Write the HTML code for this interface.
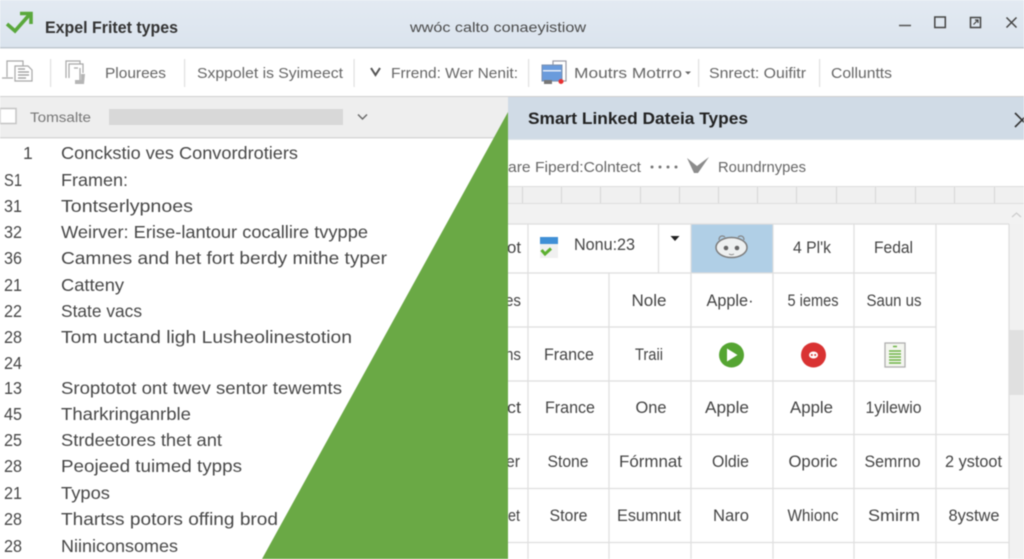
<!DOCTYPE html>
<html><head><meta charset="utf-8"><title>Expel Fritet types</title>
<style>
html,body{margin:0;padding:0;background:#fff;width:1024px;height:559px;overflow:hidden}
svg{display:block;position:absolute;left:0;top:0;filter:blur(.45px)}
text{font-family:"Liberation Sans",sans-serif;fill:#3c3c3c}
.l{font-size:17.5px;fill:#474747}
.t{font-size:15px;fill:#666}
.c{font-size:16.5px;fill:#444;text-anchor:middle}
</style></head><body>
<svg width="1024" height="559" viewBox="0 0 1024 559" xmlns="http://www.w3.org/2000/svg">
<defs><linearGradient id="tb" x1="0" y1="0" x2="0" y2="1"><stop offset="0" stop-color="#e3eaf2"/><stop offset="1" stop-color="#dbe4ee"/></linearGradient></defs>
<rect width="1024" height="559" fill="#fff"/>
<!-- title bar -->
<rect width="1024" height="47" fill="url(#tb)"/>
<rect y="47" width="1024" height="1.5" fill="#c0c8d0"/>
<path d="M7 24L15 31L30 14M20 13.500H31V24" fill="none" stroke="#5aa83c" stroke-width="3.600"/>
<text x="45" y="33" font-size="16.5" font-weight="bold" style="fill:#333" textLength="133" lengthAdjust="spacingAndGlyphs">Expel Fritet types</text>
<text x="410" y="32" font-size="14" style="fill:#4a4a4a" textLength="176" lengthAdjust="spacingAndGlyphs">wwóc calto conaeyistiow</text>
<path d="M899 25.500H911" stroke="#555" stroke-width="1.500"/>
<rect x="934.800" y="17" width="10.500" height="10.500" fill="none" stroke="#444" stroke-width="1.500"/>
<rect x="970.500" y="17.500" width="10" height="10" fill="none" stroke="#444" stroke-width="1.500"/>
<path d="M973.500 24.500L978 20M975 20H978V23" fill="none" stroke="#444" stroke-width="1.200"/>
<path d="M1006.500 17.500L1016.500 27.500M1016.500 17.500L1006.500 27.500" stroke="#444" stroke-width="1.500"/>
<!-- toolbar -->
<rect y="48.500" width="1024" height="47.500" fill="#fff"/>
<rect y="96" width="1024" height="1" fill="#d0d0d0"/>
<g fill="none" stroke="#a8a8a8" stroke-width="1.200">
<path d="M2 78H13M7 77V61H23V66"/>
<path d="M15 66H28L32 70V81H15Z" fill="#fff"/>
<path d="M18 69H25M18 72H29M18 75H29M18 78H26" stroke="#999"/>
<path d="M66 78V61H80V64M69 78V64H83V73"/>
<path d="M74 68H78M80 68V80"/>
</g>
<path d="M75 84L84 84L85 74H81V80H75Z" fill="#b5b5b5"/>
<g fill="#e0e0e0">
<rect x="50" y="59" width="1.200" height="28"/><rect x="184" y="59" width="1.200" height="28"/><rect x="353.500" y="59" width="1.200" height="28"/><rect x="528" y="59" width="1.200" height="28"/><rect x="698" y="59" width="1.200" height="28"/><rect x="819" y="59" width="1.200" height="28"/>
</g>
<text class="t" x="105" y="78" textLength="61" lengthAdjust="spacingAndGlyphs">Plourees</text>
<text class="t" x="197" y="78" textLength="146" lengthAdjust="spacingAndGlyphs">Sxppolet is Syimeect</text>
<path d="M371 68L375.500 75L380 68" fill="none" stroke="#555" stroke-width="2"/>
<text class="t" x="391" y="78" textLength="127" lengthAdjust="spacingAndGlyphs">Frrend: Wer Nenit:</text>
<rect x="553" y="61" width="13" height="20" fill="#fff" stroke="#9a9aa5" stroke-width="1.200"/>
<rect x="542" y="65" width="20" height="16" fill="#6a9bdc" stroke="#7a90b0"/>
<rect x="543" y="70" width="18" height="1.500" fill="#e8eef8"/>
<path d="M544 84H552V80H544Z" fill="#777"/>
<circle cx="561" cy="81.500" r="2.500" fill="#e83030"/>
<text class="t" x="574" y="78" textLength="108" lengthAdjust="spacingAndGlyphs">Moutrs  Motrro</text>
<path d="M685 71.500H691L688 74.500Z" fill="#666"/>
<text class="t" x="709" y="78" textLength="97" lengthAdjust="spacingAndGlyphs">Snrect:  Ouifitr</text>
<text class="t" x="831" y="78" textLength="61" lengthAdjust="spacingAndGlyphs">Colluntts</text>
<!-- filter bar -->
<rect y="97" width="508" height="40" fill="#eeeeee"/>
<rect y="137" width="508" height="1.500" fill="#d8d8d8"/>
<rect x="0" y="108.500" width="16" height="15" fill="#fff" stroke="#c4c4c4" stroke-width="1.500"/>
<text x="30" y="122" font-size="13.500" style="fill:#777" textLength="61" lengthAdjust="spacingAndGlyphs">Tomsalte</text>
<rect x="109" y="109" width="234" height="16" fill="#d8d8d8"/>
<path d="M358 114.500L362.500 119L367 114.500" fill="none" stroke="#666" stroke-width="1.400"/>
<!-- list -->
<g class="nums">
<text class="l" x="23" y="159">1</text>
<text class="l" x="4" y="186" textLength="18" lengthAdjust="spacingAndGlyphs">S1</text>
<text class="l" x="4" y="212" textLength="18" lengthAdjust="spacingAndGlyphs">31</text>
<text class="l" x="4" y="238" textLength="18" lengthAdjust="spacingAndGlyphs">32</text>
<text class="l" x="4" y="264" textLength="18" lengthAdjust="spacingAndGlyphs">36</text>
<text class="l" x="4" y="291" textLength="18" lengthAdjust="spacingAndGlyphs">21</text>
<text class="l" x="4" y="317" textLength="18" lengthAdjust="spacingAndGlyphs">22</text>
<text class="l" x="4" y="343" textLength="18" lengthAdjust="spacingAndGlyphs">28</text>
<text class="l" x="4" y="369" textLength="18" lengthAdjust="spacingAndGlyphs">24</text>
<text class="l" x="4" y="394" textLength="18" lengthAdjust="spacingAndGlyphs">13</text>
<text class="l" x="4" y="420" textLength="18" lengthAdjust="spacingAndGlyphs">45</text>
<text class="l" x="4" y="446" textLength="18" lengthAdjust="spacingAndGlyphs">25</text>
<text class="l" x="4" y="472" textLength="18" lengthAdjust="spacingAndGlyphs">28</text>
<text class="l" x="4" y="499" textLength="18" lengthAdjust="spacingAndGlyphs">21</text>
<text class="l" x="4" y="525" textLength="18" lengthAdjust="spacingAndGlyphs">28</text>
<text class="l" x="4" y="552" textLength="18" lengthAdjust="spacingAndGlyphs">28</text>
</g>
<text class="l" x="61" y="159" textLength="237" lengthAdjust="spacingAndGlyphs">Conckstio ves Convordrotiers</text>
<text class="l" x="61" y="186" textLength="67" lengthAdjust="spacingAndGlyphs">Framen:</text>
<text class="l" x="61" y="212" textLength="132" lengthAdjust="spacingAndGlyphs">Tontserlypnoes</text>
<text class="l" x="61" y="238" textLength="307" lengthAdjust="spacingAndGlyphs">Weirver: Erise-lantour cocallire tvyppe</text>
<text class="l" x="61" y="264" textLength="326" lengthAdjust="spacingAndGlyphs">Camnes and het fort berdy mithe typer</text>
<text class="l" x="61" y="291" textLength="63" lengthAdjust="spacingAndGlyphs">Catteny</text>
<text class="l" x="61" y="317" textLength="81" lengthAdjust="spacingAndGlyphs">State vacs</text>
<text class="l" x="61" y="343" textLength="291" lengthAdjust="spacingAndGlyphs">Tom uctand ligh Lusheolinestotion</text>
<text class="l" x="61" y="394" textLength="281" lengthAdjust="spacingAndGlyphs">Sroptotot ont twev sentor tewemts</text>
<text class="l" x="61" y="420" textLength="130" lengthAdjust="spacingAndGlyphs">Tharkringanrble</text>
<text class="l" x="61" y="446" textLength="161" lengthAdjust="spacingAndGlyphs">Strdeetores thet ant</text>
<text class="l" x="61" y="472" textLength="181" lengthAdjust="spacingAndGlyphs">Peojeed tuimed typps</text>
<text class="l" x="61" y="499" textLength="49" lengthAdjust="spacingAndGlyphs">Typos</text>
<text class="l" x="61" y="525" textLength="217" lengthAdjust="spacingAndGlyphs">Thartss potors offing brod</text>
<text class="l" x="61" y="552" textLength="117" lengthAdjust="spacingAndGlyphs">Niiniconsomes</text>
<!-- right panel -->
<rect x="508" y="97" width="516" height="42" fill="#d0dbe6"/>
<rect x="508" y="139" width="516" height="1" fill="#dfe5ea"/>
<text x="528" y="124" font-size="16.500" font-weight="bold" style="fill:#222" textLength="220" lengthAdjust="spacingAndGlyphs">Smart Linked Dateia Types</text>
<path d="M1015 113L1029 127M1015 127L1029 113" fill="none" stroke="#333" stroke-width="1.600"/>
<text class="t" x="508" y="172" textLength="133" lengthAdjust="spacingAndGlyphs">are Fiperd:Colntect</text>
<g fill="#777"><circle cx="652" cy="167" r="1.500"/><circle cx="660" cy="167" r="1.500"/><circle cx="668" cy="167" r="1.500"/><circle cx="676" cy="167" r="1.500"/></g>
<path d="M687 158L697 166L709 157L698 173H694Z" fill="#8c8c8c"/>
<text class="t" x="718" y="172" textLength="88" lengthAdjust="spacingAndGlyphs">Roundrnypes</text>
<!-- ruler -->
<rect x="508" y="186" width="516" height="17" fill="#f0f0f0"/>
<rect x="508" y="186" width="516" height="1" fill="#dedede"/>
<rect x="508" y="203" width="516" height="1" fill="#dedede"/>
<g fill="#d6d6d6">
<rect x="522" y="187" width="1" height="16"/><rect x="561" y="187" width="1" height="16"/><rect x="600" y="187" width="1" height="16"/><rect x="640" y="187" width="1" height="16"/><rect x="679" y="187" width="1" height="16"/><rect x="718" y="187" width="1" height="16"/><rect x="757" y="187" width="1" height="16"/><rect x="796" y="187" width="1" height="16"/><rect x="836" y="187" width="1" height="16"/><rect x="875" y="187" width="1" height="16"/><rect x="915" y="187" width="1" height="16"/><rect x="954" y="187" width="1" height="16"/><rect x="994" y="187" width="1" height="16"/>
</g>
<rect x="508" y="204" width="516" height="20" fill="#f2f2f2"/>
<!-- scrollbar -->
<rect x="1009" y="224" width="15" height="335" fill="#f1f1f1"/>
<rect x="1009" y="330" width="15" height="65" fill="#e0e0e0"/>
<path d="M1012 217L1016.500 213L1021 217" fill="none" stroke="#ccc" stroke-width="1.200"/>
<!-- grid -->
<rect x="691" y="224" width="82" height="49" fill="#b0cfe6"/>
<g fill="none" stroke="#dedede" stroke-width="1.200">
<path d="M508 224H1009M508 273H936M508 327H936M508 381H936M508 434.500H1009M508 488.500H1009M508 542.500H1009"/>
<path d="M528 224V559M609 273V559M658.500 224V273M691 224V559M773 224V559M854 224V559M936 224V559M1009 224V559"/>
</g>
<text class="c" x="514" y="253" textLength="14" lengthAdjust="spacingAndGlyphs">ot</text>
<text class="c" x="513" y="306" textLength="16" lengthAdjust="spacingAndGlyphs">es</text>
<text class="c" x="513" y="360" textLength="16" lengthAdjust="spacingAndGlyphs">ns</text>
<text class="c" x="514" y="413" textLength="14" lengthAdjust="spacingAndGlyphs">ct</text>
<text class="c" x="513" y="467" textLength="14" lengthAdjust="spacingAndGlyphs">er</text>
<text class="c" x="514" y="521" textLength="12" lengthAdjust="spacingAndGlyphs">et</text>
<!-- row 1 -->
<rect x="540" y="237" width="18" height="21" fill="#f0f0f0"/>
<rect x="540" y="237" width="18" height="7" fill="#3f8fd6"/>
<path d="M541.500 250L545 254L551 248.500" fill="none" stroke="#5cb030" stroke-width="3"/>
<text x="574" y="250" font-size="16.500" style="fill:#444" textLength="61" lengthAdjust="spacingAndGlyphs">Nonu:23</text>
<path d="M670.500 236H679.500L675 241Z" fill="#222"/>
<path d="M719 240C719 236 722 235 725 237M744 240C744 236 741 235 738 237" fill="none" stroke="#808080" stroke-width="1.100"/>
<ellipse cx="731.500" cy="247.500" rx="15.500" ry="10" fill="#eef0f0" stroke="#7c7c7c" stroke-width="1.500"/>
<circle cx="726" cy="248" r="2.300" fill="#666"/><circle cx="737" cy="248" r="2.300" fill="#666"/>
<path d="M729 254Q731.500 255.500 734 254" fill="none" stroke="#888"/>
<text class="c" x="812" y="253" textLength="38" lengthAdjust="spacingAndGlyphs">4 Pl'k</text>
<text class="c" x="893.500" y="253" textLength="39" lengthAdjust="spacingAndGlyphs">Fedal</text>
<!-- row 2 -->
<text class="c" x="649" y="306" textLength="35" lengthAdjust="spacingAndGlyphs">Nole</text>
<text class="c" x="730" y="306" textLength="47" lengthAdjust="spacingAndGlyphs">Apple·</text>
<text class="c" x="813" y="306" textLength="51" lengthAdjust="spacingAndGlyphs">5 iemes</text>
<text class="c" x="894" y="306" textLength="55" lengthAdjust="spacingAndGlyphs">Saun us</text>
<!-- row 3 -->
<text class="c" x="569" y="360" textLength="50" lengthAdjust="spacingAndGlyphs">France</text>
<text class="c" x="649" y="360" textLength="28" lengthAdjust="spacingAndGlyphs">Traii</text>
<circle cx="731.500" cy="355" r="12.500" fill="#55a532"/>
<path d="M727 348.500L737.500 355L727 361.500Z" fill="#fff"/>
<circle cx="813.500" cy="355" r="12.500" fill="#d93232"/>
<ellipse cx="813.500" cy="355" rx="4.500" ry="3.500" fill="#fff"/>
<circle cx="811.800" cy="355" r="1" fill="#d93232"/><circle cx="815.200" cy="355" r="1" fill="#d93232"/>
<rect x="885" y="343" width="20" height="24" fill="#f4f6f0" stroke="#b0b0b0" stroke-width="1.300"/>
<path d="M893 346.500H897M889 351H901M889 354H901M889 357H901M889 360H901M889 363H901" stroke="#6cb444" stroke-width="1.600"/>
<!-- row 4 -->
<text class="c" x="570" y="413" textLength="50" lengthAdjust="spacingAndGlyphs">France</text>
<text class="c" x="651" y="413" textLength="31" lengthAdjust="spacingAndGlyphs">One</text>
<text class="c" x="727" y="413" textLength="44" lengthAdjust="spacingAndGlyphs">Apple</text>
<text class="c" x="811.500" y="413" textLength="43" lengthAdjust="spacingAndGlyphs">Apple</text>
<text class="c" x="893.500" y="413" textLength="56" lengthAdjust="spacingAndGlyphs">1yilewio</text>
<!-- row 5 -->
<text class="c" x="568" y="467" textLength="41" lengthAdjust="spacingAndGlyphs">Stone</text>
<text class="c" x="650.500" y="467" textLength="63" lengthAdjust="spacingAndGlyphs">Fórmnat</text>
<text class="c" x="730.500" y="467" textLength="37" lengthAdjust="spacingAndGlyphs">Oldie</text>
<text class="c" x="813" y="467" textLength="49" lengthAdjust="spacingAndGlyphs">Oporic</text>
<text class="c" x="892.500" y="467" textLength="56" lengthAdjust="spacingAndGlyphs">Semrno</text>
<text class="c" x="973.500" y="467" textLength="57" lengthAdjust="spacingAndGlyphs">2 ystoot</text>
<!-- row 6 -->
<text class="c" x="568.500" y="521" textLength="38" lengthAdjust="spacingAndGlyphs">Store</text>
<text class="c" x="649" y="521" textLength="64" lengthAdjust="spacingAndGlyphs">Esumnut</text>
<text class="c" x="731" y="521" textLength="36" lengthAdjust="spacingAndGlyphs">Naro</text>
<text class="c" x="813" y="521" textLength="51" lengthAdjust="spacingAndGlyphs">Whionc</text>
<text class="c" x="894" y="521" textLength="52" lengthAdjust="spacingAndGlyphs">Smirm</text>
<text class="c" x="974" y="521" textLength="51" lengthAdjust="spacingAndGlyphs">8ystwe</text>
<!-- triangle -->
<path d="M508 112V559H262Z" fill="#6aa945"/>
</svg>
</body></html>
